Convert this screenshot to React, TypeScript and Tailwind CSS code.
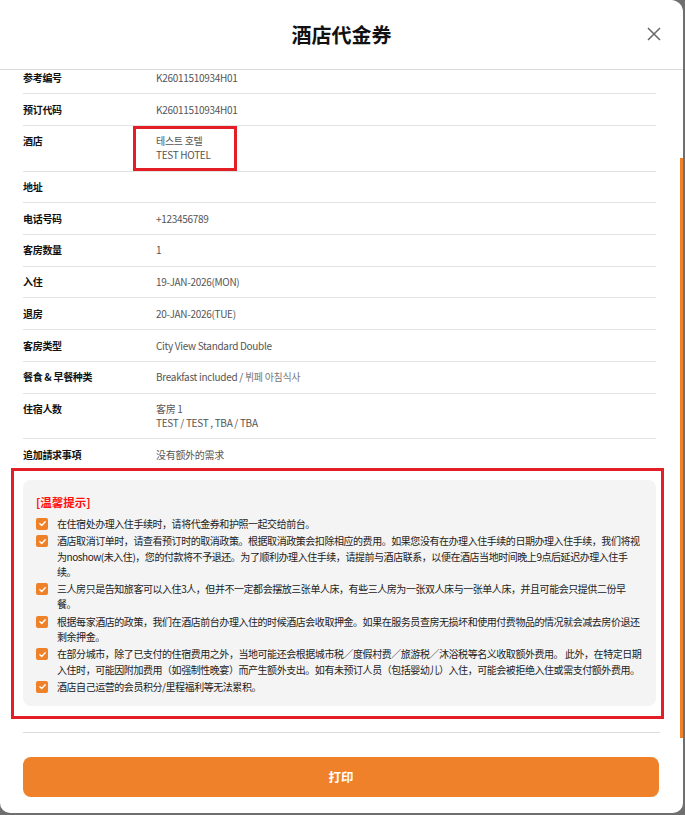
import React from "react";

const font = "font-['Noto_Sans_CJK_SC','Noto_Sans_CJK_KR',sans-serif]";

interface Row {
  label: string;
  values: React.ReactNode[];
  boxed?: boolean;
}

const rows: Row[] = [
  { label: "参考编号", values: ["K26011510934H01"] },
  { label: "预订代码", values: ["K26011510934H01"] },
  { label: "酒店", values: ["테스트 호텔", "TEST HOTEL"], boxed: true },
  { label: "地址", values: [""] },
  { label: "电话号码", values: ["+123456789"] },
  { label: "客房数量", values: ["1"] },
  { label: "入住", values: ["19-JAN-2026(MON)"] },
  { label: "退房", values: ["20-JAN-2026(TUE)"] },
  { label: "客房类型", values: ["City View Standard Double"] },
  {
    label: "餐食 & 早餐种类",
    values: [
      <span key="b">
        Breakfast included / <span className="text-[#777]">뷔페 아침식사</span>
      </span>,
    ],
  },
  { label: "住宿人数", values: ["客房 1", "TEST / TEST , TBA / TBA"] },
  { label: "追加請求事項", values: ["没有额外的需求"] },
];

const tips: string[][] = [
  ["在住宿处办理入住手续时，请将代金券和护照一起交给前台。"],
  [
    "酒店取消订单时，请查看预订时的取消政策。根据取消政策会扣除相应的费用。如果您没有在办理入住手续的日期办理入住手续，我们将视",
    "为noshow(未入住)，您的付款将不予退还。为了顺利办理入住手续，请提前与酒店联系，以便在酒店当地时间晚上9点后延迟办理入住手",
    "续。",
  ],
  [
    "三人房只是告知旅客可以入住3人，但并不一定都会摆放三张单人床，有些三人房为一张双人床与一张单人床，并且可能会只提供二份早",
    "餐。",
  ],
  [
    "根据每家酒店的政策，我们在酒店前台办理入住的时候酒店会收取押金。如果在服务员查房无损坏和使用付费物品的情况就会减去房价退还",
    "剩余押金。",
  ],
  [
    "在部分城市，除了已支付的住宿费用之外，当地可能还会根据城市税／度假村费／旅游税／沐浴税等名义收取额外费用。 此外，在特定日期",
    "入住时，可能因附加费用（如强制性晚宴）而产生额外支出。如有未预订人员（包括婴幼儿）入住，可能会被拒绝入住或需支付额外费用。",
  ],
  ["酒店自己运营的会员积分/里程福利等无法累积。"],
];

function CheckIcon() {
  return (
    <span className="mt-[2px] flex h-[12px] w-[12px] shrink-0 items-center justify-center rounded-[2px] bg-[#ef8129]">
      <svg width="9" height="9" viewBox="0 0 12 12" fill="none">
        <path
          d="M2.5 6.2 L5 8.6 L9.6 3.6"
          stroke="#fff"
          strokeWidth="1.8"
          strokeLinecap="round"
          strokeLinejoin="round"
        />
      </svg>
    </span>
  );
}

export default function App() {
  return (
    <div className={`h-[815px] w-[685px] overflow-hidden bg-[#6f6f6f] ${font}`}>
      <div className="relative flex h-[813px] w-[683px] flex-col overflow-hidden rounded-b-[10px] rounded-tr-[12px] bg-white">
        {/* header */}
        <div className="relative flex h-[70px] shrink-0 items-center justify-center border-b border-[#dcdcdc]">
          <h1 className="text-[20px] font-bold leading-none text-[#111]">酒店代金券</h1>
          <button className="absolute right-[22px] top-[27px]">
            <svg width="14" height="14" viewBox="0 0 14 14" fill="none">
              <path d="M1 1 L13 13 M13 1 L1 13" stroke="#666" strokeWidth="1.5" />
            </svg>
          </button>
        </div>

        {/* body */}
        <div className="flex flex-col pl-[23px] pr-[27px] tracking-[-0.3px]">
          {rows.map((row, i) => (
            <div
              key={row.label}
              className={`flex border-b border-[#e2e2e2] text-[10px] leading-[14px] ${
                i === 0 ? "pb-[8.35px] pt-[1px]" : "py-[8.35px]"
              }`}
            >
              <div className="w-[133px] shrink-0 font-semibold text-[#111]">{row.label}</div>
              <div className="relative flex flex-col text-[#555]">
                {row.values.map((v, j) => (
                  <div key={j} className="min-h-[14px]">
                    {v}
                  </div>
                ))}
                {row.boxed && (
                  <div className="absolute -bottom-[9px] -left-[23px] -right-[26px] -top-[8px] border-[3.5px] border-[#e31e24]" />
                )}
              </div>
            </div>
          ))}

          <div className="relative mt-[9px]">
            <div className="absolute -bottom-[13px] -left-[12px] -right-[8px] -top-[12px] border-[3.5px] border-[#e31e24]" />
            <div className="rounded-[8px] bg-[#f4f4f4] pb-[12px] pl-[13px] pr-[10px] pt-[14px]">
              <p className="text-[11.5px] font-bold leading-[16px] tracking-normal text-[#ff1010]">[温馨提示]</p>
              <ul className="mt-[6px] flex flex-col gap-[2px]">
                {tips.map((lines) => (
                  <li key={lines[0]} className="flex gap-[9px] text-[10px] leading-[15.3px] tracking-[-0.45px] text-[#222]">
                    <CheckIcon />
                    <div className="flex flex-col">
                      {lines.map((l) => (
                        <span key={l} className="h-[15.3px] whitespace-nowrap">
                          {l}
                        </span>
                      ))}
                    </div>
                  </li>
                ))}
              </ul>
            </div>
          </div>
        </div>

        {/* footer */}
        <div className="mt-auto px-[23px] pb-[16px]">
          <div className="border-t border-[#dcdcdc]" />
          <button className="mt-[24px] flex h-[40px] w-[636px] items-center justify-center rounded-[8px] bg-[#ef812a] text-[12.5px] font-bold text-white">
            打印
          </button>
        </div>

        {/* scrollbar thumb */}
        <div className="absolute right-0 top-[158px] h-[580px] w-[3px] bg-[#ef8129]" />
      </div>
    </div>
  );
}
